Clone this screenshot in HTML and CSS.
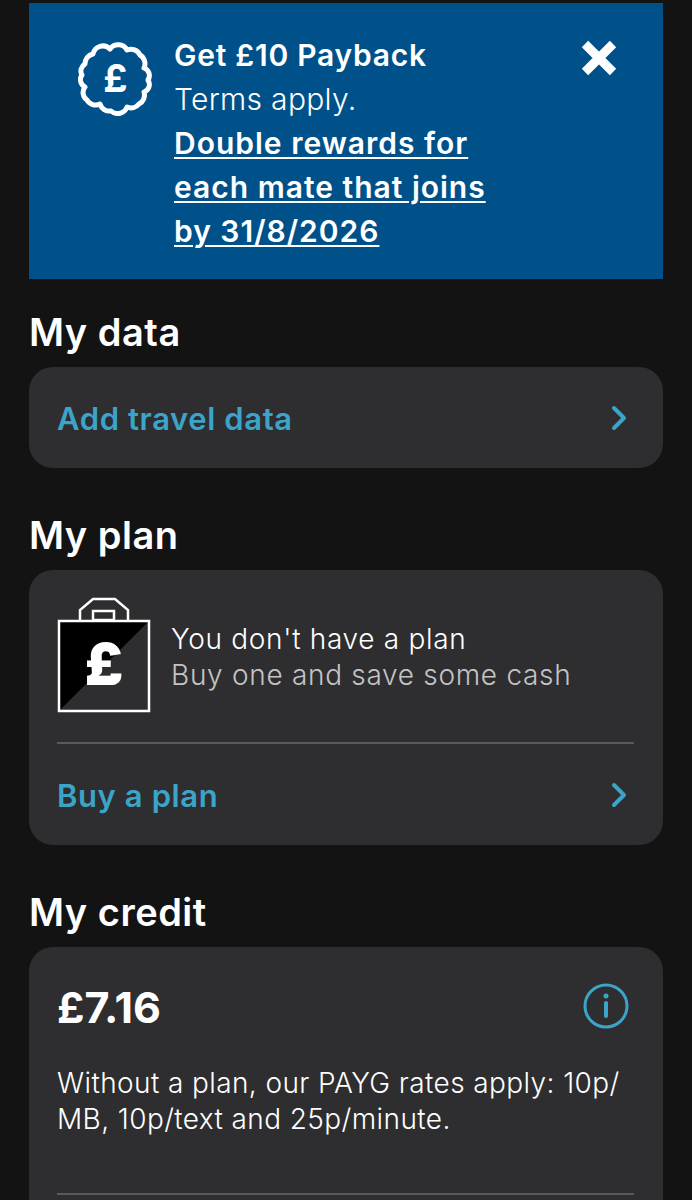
FILE: index.html
```html
<!DOCTYPE html>
<html lang="en">
<head>
    <meta charset="UTF-8">
    <meta name="viewport" content="width=device-width, initial-scale=1.0">
    <title>My account</title>
    <link rel="stylesheet" href="styles.css">
</head>
<body>

<div class="page">
    <div class="promo">
        <svg class="promo-icon" viewBox="0 0 76 74" fill="none" stroke="#fff" stroke-width="5" stroke-linejoin="round" stroke-linecap="round">
            <path d="M15 12A10 10 0 0 1 32 7A10 10 0 0 1 49 8A10 10 0 0 1 62 13A10 10 0 0 1 66 26A8 8 0 0 1 70 38A8 8 0 0 1 66 50A10 10 0 0 1 61 62A10 10 0 0 1 49 65A10 10 0 0 1 33 69A10 10 0 0 1 22 62A10 10 0 0 1 9 58A9 9 0 0 1 7 45A8 8 0 0 1 4 33A8 8 0 0 1 7 22A10 10 0 0 1 15 12Z"/>
            <text class="promo-pound" x="37.500" y="50" text-anchor="middle" fill="#fff" stroke="none">£</text>
        </svg>
        <div class="promo-text">
            <div class="promo-title">Get £10 Payback</div>
            <div class="promo-terms">Terms apply.</div>
            <a class="promo-link" href="#">Double rewards for<br>each mate that joins<br>by 31/8/2026</a>
        </div>
        <svg class="promo-close" viewBox="0 0 36 36" fill="none" stroke="#fff" stroke-width="9">
            <path d="M4 4L32 32M32 4L4 32"/>
        </svg>
    </div>

    <h2 class="section-title first">My data</h2>
    <div class="card">
        <a class="row-link" href="#">
            <span>Add travel data</span>
            <svg class="chevron" viewBox="0 0 18 26" fill="none" stroke="#3ba4c8" stroke-width="4" stroke-linecap="round" stroke-linejoin="round"><path d="M4 3L14 13L4 23"/></svg>
        </a>
    </div>

    <h2 class="section-title">My plan</h2>
    <div class="card plan-card">
        <div class="plan-info">
            <svg class="bag-icon" viewBox="0 0 94 116">
                <path d="M2 24H92V114H2Z" fill="#000"/>
                <path d="M92 24V114H2Z" fill="#2e2e30"/>
                <path d="M2 24H92V114H2Z" fill="none" stroke="#fff" stroke-width="2.500"/>
                <path d="M23 24V13L36 2H58L71 13V24" fill="none" stroke="#fff" stroke-width="2.500"/>
                <rect x="36" y="14" width="21" height="9" fill="none" stroke="#fff" stroke-width="2.500"/>
                <text class="bag-pound" x="47" y="88" text-anchor="middle" fill="#fff">£</text>
            </svg>
            <div class="plan-copy">
                <p class="plan-main">You don't have a plan</p>
                <p class="plan-sub">Buy one and save some cash</p>
            </div>
        </div>
        <a class="row-link plan-link" href="#">
            <span>Buy a plan</span>
            <svg class="chevron" viewBox="0 0 18 26" fill="none" stroke="#3ba4c8" stroke-width="4" stroke-linecap="round" stroke-linejoin="round"><path d="M4 3L14 13L4 23"/></svg>
        </a>
    </div>

    <h2 class="section-title">My credit</h2>
    <div class="card credit-card">
        <div class="credit-top">
            <span class="credit-amount">£7.16</span>
            <svg class="info-icon" viewBox="0 0 46 46" fill="none" stroke="#3ba4c8" stroke-width="3">
                <circle cx="23" cy="23" r="21"/>
                <path d="M23 20V33" stroke-width="4" stroke-linecap="round"/>
                <circle cx="23" cy="13" r="2.500" fill="#3ba4c8" stroke="none"/>
            </svg>
        </div>
        <p class="credit-note">Without a plan, our PAYG rates apply: 10p/<br>MB, 10p/text and 25p/minute.</p>
        <div class="credit-rule"></div>
    </div>
</div>

</body>
</html>
```

FILE: styles.css
```css
html, body { margin: 0; padding: 0; background-color: #131314; }
body { font-family: Inter, "Open Sans", sans-serif; color: #fff; }
.page { height: 1200px; overflow: hidden; padding: 3px 29px 0; box-sizing: border-box; }
p { margin: 0; }

.promo { display: flex; align-items: flex-start; height: 276px; box-sizing: border-box; padding: 30px 46px 0 49px; background-color: #00518a; }
.promo-icon { width: 76px; height: 74px; margin-top: 9px; flex: none; }
.promo-pound { font-size: 38px; font-weight: 700; }
.promo-text { flex: 1; margin-left: 20px; font-size: 30px; line-height: 44px; letter-spacing: 0.75px; }
.promo-title { font-weight: 600; }
.promo-terms { font-weight: 300; letter-spacing: 0.3px; }
.promo-link { color: #fff; font-weight: 600; letter-spacing: 1px; text-decoration: underline; text-decoration-thickness: 2px; text-underline-offset: 3px; }
.promo-close { width: 36px; height: 36px; margin-top: 7px; flex: none; }

.section-title { margin: 45px 0 13px; font-size: 38px; line-height: 44px; font-weight: 600; letter-spacing: 0.5px; }
.section-title.first { margin-top: 31px; }

.card { background-color: #2e2e30; border-radius: 24px; padding: 0 29px 0 28px; }
.row-link { display: flex; justify-content: space-between; align-items: center; height: 101px; color: #3ba4c8; font-size: 31px; font-weight: 600; letter-spacing: 0.6px; text-decoration: none; }
.row-link span { padding-top: 2px; }
.chevron { width: 18px; height: 26px; margin-right: 6px; }

.plan-info { display: flex; align-items: center; gap: 20px; padding: 27px 0 29px; border-bottom: 2px solid #59595b; }
.bag-icon { width: 94px; height: 116px; flex: none; }
.bag-pound { font-size: 58px; font-weight: 900; }
.plan-copy { padding-top: 4px; font-size: 28px; line-height: 36px; font-weight: 300; letter-spacing: 0.7px; }
.plan-sub { color: #c4c4c4; }

.credit-card { height: 400px; padding-top: 28px; }
.credit-top { display: flex; justify-content: space-between; align-items: center; height: 62px; }
.credit-amount { padding-top: 2px; font-size: 43px; font-weight: 700; }
.info-icon { width: 46px; height: 46px; margin-right: 5px; }
.credit-note { margin-top: 28px; font-size: 28px; line-height: 36px; font-weight: 300; letter-spacing: 0.4px; }
.credit-rule { height: 2px; margin-top: 56px; background-color: #59595b; }
```
